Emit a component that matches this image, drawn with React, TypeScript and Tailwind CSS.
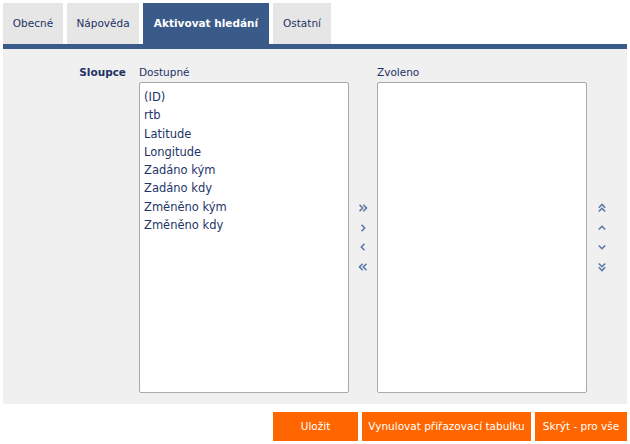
import React from "react";

const tabs = [
  { label: "Obecné", w: "w-[60px]" },
  { label: "Nápověda", w: "w-[72px]" },
  { label: "Aktivovat hledání", w: "w-[126px]", active: true },
  { label: "Ostatní", w: "w-[58px]" },
];

const available = [
  "(ID)",
  "rtb",
  "Latitude",
  "Longitude",
  "Zadáno kým",
  "Zadáno kdy",
  "Změněno kým",
  "Změněno kdy",
];

// small chevron glyphs used by the list mover buttons
function Chevron({ dir, double }: { dir: "left" | "right" | "up" | "down"; double?: boolean }) {
  const rot = { right: 0, down: 90, left: 180, up: 270 }[dir];
  return (
    <svg width="10" height="10" viewBox="0 0 10 10" style={{ transform: `rotate(${rot}deg)` }}>
      {double ? (
        <g fill="none" stroke="#5b79a8" strokeWidth="1.6">
          <path d="M1.5 1.8 L4.7 5 L1.5 8.2" />
          <path d="M5.3 1.8 L8.5 5 L5.3 8.2" />
        </g>
      ) : (
        <path d="M3.5 1.8 L6.7 5 L3.5 8.2" fill="none" stroke="#5b79a8" strokeWidth="1.6" />
      )}
    </svg>
  );
}

function ArrowBtn({ children }: { children: React.ReactNode }) {
  return (
    <button type="button" className="flex h-[19.7px] w-[20px] items-center justify-center">
      {children}
    </button>
  );
}

function ListBox({ items = [] }: { items?: string[] }) {
  return (
    <div className="h-[311px] w-[210px] rounded-[2px] border border-[#a9a9a9] bg-white pl-[4px] pt-[5px]">
      {items.map((it) => (
        <div key={it} className="leading-[18.3px] text-[11.5px] text-[#1e3468]">
          {it}
        </div>
      ))}
    </div>
  );
}

export default function App() {
  return (
    <div
      className="h-[444px] w-[630px] bg-white text-[10.5px] text-[#1e3264]"
      style={{ fontFamily: '"DejaVu Sans", Verdana, sans-serif' }}
    >
      <div className="flex gap-[4px] pl-[3px] pt-[3px]">
        {tabs.map((t) => (
          <div
            key={t.label}
            className={`flex h-[41px] items-center justify-center ${t.w} ${
              t.active ? "bg-[#3a5a89] font-bold text-white" : "bg-[#e6e6e6] text-[#1e3264]"
            }`}
          >
            {t.label}
          </div>
        ))}
      </div>
      <div className="ml-[3px] h-[5px] w-[624px] bg-[#3a5a89]" />

      <div className="ml-[3px] flex w-[624px] bg-[#f0f0f0] pb-[11px] pt-[16px]">
        <div className="w-[123px] text-right font-bold leading-[14px]">Sloupce</div>
        <div className="ml-[13px] flex flex-col">
          <div className="mb-[3px] leading-[14px]">Dostupné</div>
          <ListBox items={available} />
        </div>
        <div className="flex w-[28px] flex-col items-center justify-center pt-[17px]">
          <ArrowBtn>
            <Chevron dir="right" double />
          </ArrowBtn>
          <ArrowBtn>
            <Chevron dir="right" />
          </ArrowBtn>
          <ArrowBtn>
            <Chevron dir="left" />
          </ArrowBtn>
          <ArrowBtn>
            <Chevron dir="left" double />
          </ArrowBtn>
        </div>
        <div className="flex flex-col">
          <div className="mb-[3px] leading-[14px]">Zvoleno</div>
          <ListBox />
        </div>
        <div className="flex w-[30px] flex-col items-center justify-center pt-[17px]">
          <ArrowBtn>
            <Chevron dir="up" double />
          </ArrowBtn>
          <ArrowBtn>
            <Chevron dir="up" />
          </ArrowBtn>
          <ArrowBtn>
            <Chevron dir="down" />
          </ArrowBtn>
          <ArrowBtn>
            <Chevron dir="down" double />
          </ArrowBtn>
        </div>
      </div>

      <div className="mt-[8px] flex justify-end gap-[4px] pr-[3px] text-[10.5px] text-white">
        <button type="button" className="h-[29px] w-[85px] bg-[#ff6600]">
          Uložit
        </button>
        <button type="button" className="h-[29px] w-[169px] bg-[#ff6600]">
          Vynulovat přiřazovací tabulku
        </button>
        <button type="button" className="h-[29px] w-[92px] bg-[#ff6600]">
          Skrýt - pro vše
        </button>
      </div>
    </div>
  );
}
